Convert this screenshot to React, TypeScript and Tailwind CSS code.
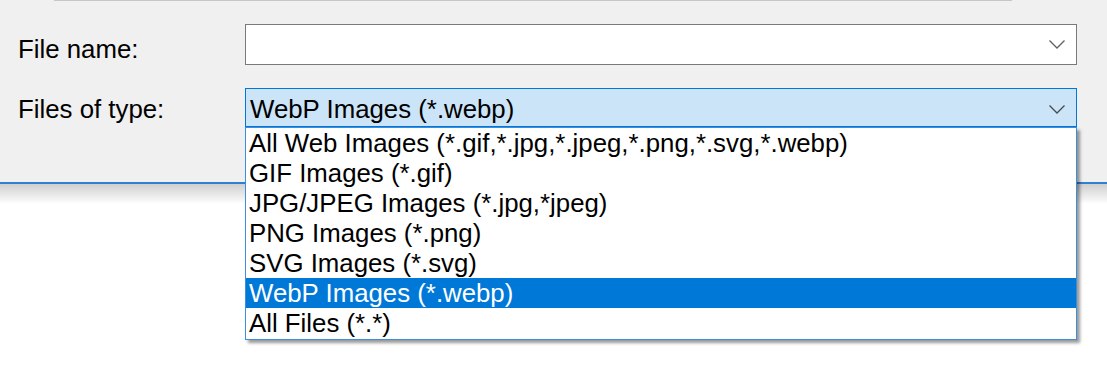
import React from 'react'

const types = [
  'All Web Images (*.gif,*.jpg,*.jpeg,*.png,*.svg,*.webp)',
  'GIF Images (*.gif)',
  'JPG/JPEG Images (*.jpg,*jpeg)',
  'PNG Images (*.png)',
  'SVG Images (*.svg)',
  'WebP Images (*.webp)',
  'All Files (*.*)',
]

function Chevron({ color }: { color: string }) {
  return (
    <svg width="16" height="9" viewBox="0 0 16 9" className="shrink-0">
      <path d="M0.5 0.5 L8 8 L15.5 0.5" fill="none" stroke={color} strokeWidth="1.3" />
    </svg>
  )
}

export default function App() {
  const selected = 5
  return (
    <div
      className="relative w-[1107px] h-[391px] bg-white overflow-hidden text-black"
      style={{ fontFamily: '"Liberation Sans", Arial, sans-serif' }}
    >
      <div className="bg-[#f0f0f0] h-[184px] border-b-2 border-[#2f7fd4]">
        <div className="ml-[54px] w-[958px] h-[1px] bg-[#c6c6c6]" />
        <div className="pt-[23px] text-[25.8px] leading-[30px]">
          <div className="flex items-start">
            <div className="w-[245px] pl-[18px] pt-[10px]">File name:</div>
            <div className="w-[832px] h-[41px] bg-white border border-[#7a7a7a] flex items-center justify-end pr-[11px]">
              <Chevron color="#606060" />
            </div>
          </div>
          <div className="flex items-start mt-[23px]">
            <div className="w-[245px] pl-[18px] pt-[6px]">Files of type:</div>
            <div className="w-[832px] h-[39px] bg-[#cce4f7] border border-[#0078d7] flex items-start justify-between pl-[4px] pt-[5px] pr-[11px]">
              <span>WebP Images (*.webp)</span>
              <span className="pt-[11px]">
                <Chevron color="#4a4a4a" />
              </span>
            </div>
          </div>
        </div>
      </div>
      <div className="h-[20px] bg-gradient-to-b from-[#cfcfcf] to-white" />

      <div className="absolute left-[245px] top-[127px] w-[832px] h-[213px] bg-white border border-[#3d8ee0] shadow-[3px_3px_3px_rgba(0,0,0,0.4)] text-[25.8px] leading-[30px]">
        {types.map((t, i) => (
          <div
            key={t}
            className={
              i === selected
                ? 'h-[30px] pl-[3px] bg-[#0078d7] text-white whitespace-nowrap'
                : 'h-[30px] pl-[3px] whitespace-nowrap'
            }
          >
            {t}
          </div>
        ))}
      </div>
    </div>
  )
}
